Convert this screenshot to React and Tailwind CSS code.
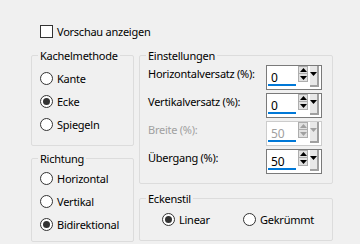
const Radio = ({ checked, label, className = "" }) => (
    <div className={`flex items-center gap-[4px] ${className}`}>
        <span className="w-[13px] h-[13px] rounded-full border border-[#333333] bg-white flex items-center justify-center shrink-0">
            {checked && <span className="w-[7px] h-[7px] rounded-full bg-[#333333]" />}
        </span>
        <span>{label}</span>
    </div>
);

const Tri = ({ up, dim }) => (
    <svg width="7" height="4" viewBox="0 0 7 4">
        <polygon points={up ? "0,4 7,4 3.5,0" : "0,0 7,0 3.5,4"} fill={dim ? "#a0a0a0" : "#000"} />
    </svg>
);

const SpinBox = ({ value, disabled }) => (
    <div className={`w-[56px] h-[25px] border ${disabled ? "border-[#cccccc]" : "border-[#7a7a7a]"} bg-white flex shrink-0`}>
        <div className="w-[28px] ml-[1px] flex flex-col">
            <span className={`pl-[3px] pt-[4px] h-[18px] text-[12px] tracking-normal ${disabled ? "text-[#a0a0a0]" : "text-black"}`}>{value}</span>
            <span className="h-[2px] bg-[#0078d7]" />
        </div>
        <div className="ml-[2px] flex flex-col">
            <span className="w-[10px] h-[8px] border border-[#adadad] bg-[#e1e1e1] flex items-center justify-center">
                <Tri up dim={disabled} />
            </span>
            <span className="w-[10px] h-[8px] border border-t-0 border-[#adadad] bg-[#e1e1e1] flex items-center justify-center">
                <Tri dim={disabled} />
            </span>
        </div>
        <div className="ml-[2px] w-[9px] h-[21px] bg-[#e8e8e8] border-r-2 border-b-2 border-[#a0a0a0] flex justify-center pt-[6px]">
            <Tri dim={disabled} />
        </div>
    </div>
);

const Row = ({ label, value, disabled }) => (
    <div className="flex items-start justify-between h-[28px]">
        <span className={`whitespace-nowrap pt-[1px] ${disabled ? "text-[#a0a0a0]" : ""}`}>{label}</span>
        <SpinBox value={value} disabled={disabled} />
    </div>
);

const App = () => {
    return (
        <div className="w-[360px] h-[244px] bg-[#f0f0f0] text-[11px] leading-[15px] tracking-[-0.25px] text-black font-['Noto_Sans',sans-serif] pl-[31px] pt-[25px] whitespace-nowrap">
            <label className="flex items-center gap-[4px] ml-[9px] h-[13px]">
                <span className="w-[13px] h-[13px] border border-[#333333] bg-white" />
                <span>Vorschau anzeigen</span>
            </label>

            <div className="flex gap-[5px] mt-[10px]">
                <div className="flex flex-col gap-[5px] w-[103px]">
                    <fieldset className="h-[98px] border border-[#dcdcdc] rounded-[2px] pl-[6px]">
                        <legend className="px-[2px]">Kachelmethode</legend>
                        <div className="pl-[2px] pt-[4px]">
                            <Radio label="Kante" className="h-[23px]" />
                            <Radio label="Ecke" checked className="h-[23px]" />
                            <Radio label="Spiegeln" className="h-[23px]" />
                        </div>
                    </fieldset>
                    <fieldset className="h-[91px] border border-[#dcdcdc] rounded-[2px] pl-[6px]">
                        <legend className="px-[2px]">Richtung</legend>
                        <div className="pl-[2px] pt-[1px]">
                            <Radio label="Horizontal" className="h-[23px]" />
                            <Radio label="Vertikal" className="h-[23px]" />
                            <Radio label="Bidirektional" checked className="h-[23px]" />
                        </div>
                    </fieldset>
                </div>

                <div className="flex flex-col gap-[7px] w-[194px]">
                    <fieldset className="h-[136px] border border-[#dcdcdc] rounded-[2px] pl-[6px] pr-[10px]">
                        <legend className="px-[2px]">Einstellungen</legend>
                        <div className="pl-[2px] pt-[2px]">
                            <Row label="Horizontalversatz (%):" value="0" />
                            <Row label="Vertikalversatz (%):" value="0" />
                            <Row label="Breite (%):" value="50" disabled />
                            <Row label="Übergang (%):" value="50" />
                        </div>
                    </fieldset>
                    <fieldset className="h-[50px] border border-[#dcdcdc] rounded-[2px] pl-[6px]">
                        <legend className="px-[2px]">Eckenstil</legend>
                        <div className="flex pl-[16px] pt-[6px]">
                            <Radio label="Linear" checked className="w-[81px]" />
                            <Radio label="Gekrümmt" />
                        </div>
                    </fieldset>
                </div>
            </div>
        </div>
    );
};

export default App;
